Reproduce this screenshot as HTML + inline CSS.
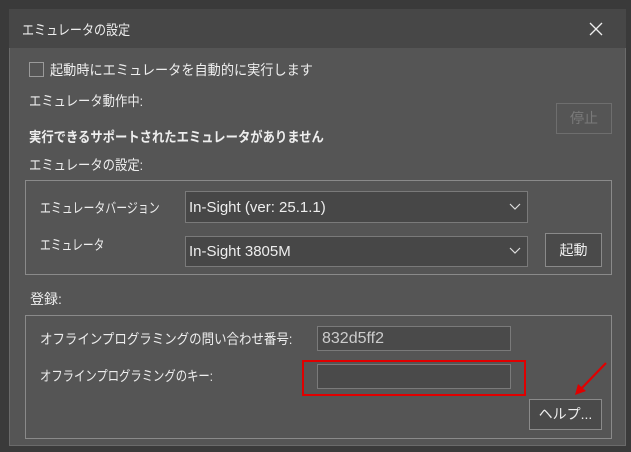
<!DOCTYPE html>
<html><head><meta charset="utf-8"><style>
*{box-sizing:border-box;margin:0;padding:0}
body{width:631px;height:452px;background:#3a3a3a;font-family:"Liberation Sans","Noto Sans CJK JP",sans-serif;font-size:14px;color:#eee;position:relative;overflow:hidden}
.a{position:absolute}
.dlg{left:9px;top:9px;width:617px;height:437px;background:#555;border:1px solid #6a6a6a}
.title{left:9px;top:9px;width:617px;height:39px;background:#474747}
.t{position:absolute;white-space:nowrap;line-height:16px;transform-origin:0 50%}
.box{position:absolute;border:1px solid #8a8a8a}
.combo{position:absolute;background:#474747;border:1px solid #7a7a7a}
.btn{position:absolute;background:#4a4a4a;border:1px solid #8a8a8a;text-align:center;line-height:28px}
.l{font-size:15px}
</style></head><body>
<div class="a dlg"></div>
<div class="a title"></div>
<div class="t" style="left:22px;top:22px;transform:scaleX(0.86)">エミュレータの設定</div>
<svg class="a" style="left:589px;top:22px" width="14" height="14"><path d="M1 1L13 13M13 1L1 13" stroke="#eee" stroke-width="1.3"/></svg>
<div class="box" style="left:29px;top:62px;width:15px;height:15px;border-color:#9a9a9a"></div>
<div class="t" style="left:50px;top:62px;transform:scaleX(0.94)">起動時にエミュレータを自動的に実行します</div>
<div class="t" style="left:29px;top:93px;transform:scaleX(0.88)">エミュレータ動作中:</div>
<div class="btn" style="left:556px;top:103px;width:56px;height:31px;color:#7a7a7a;border-color:#6e6e6e;background:#555">停止</div>
<div class="t" style="left:29px;top:129px;font-weight:bold;transform:scaleX(0.88)">実行できるサポートされたエミュレータがありません</div>
<div class="t" style="left:29px;top:157px;transform:scaleX(0.88)">エミュレータの設定:</div>
<div class="box" style="left:25px;top:180px;width:587px;height:95px"></div>
<div class="t" style="left:40px;top:200px;transform:scaleX(0.78)">エミュレータバージョン</div>
<div class="combo" style="left:185px;top:191px;width:343px;height:32px"></div>
<div class="t l" style="left:189px;top:200px">In-Sight (ver: 25.1.1)</div>
<div class="t" style="left:40px;top:237px;transform:scaleX(0.77)">エミュレータ</div>
<div class="combo" style="left:185px;top:236px;width:343px;height:31px"></div>
<div class="t l" style="left:189px;top:244px">In-Sight 3805M</div>
<svg class="a" style="left:509px;top:203px" width="12" height="8"><path d="M1 1L6 6L11 1" stroke="#ddd" fill="none" stroke-width="1.2"/></svg>
<svg class="a" style="left:509px;top:247px" width="12" height="8"><path d="M1 1L6 6L11 1" stroke="#ddd" fill="none" stroke-width="1.2"/></svg>
<div class="btn" style="left:545px;top:233px;width:57px;height:34px;line-height:32px">起動</div>
<div class="t" style="left:30px;top:291px">登録:</div>
<div class="box" style="left:25px;top:315px;width:587px;height:124px"></div>
<div class="t" style="left:40px;top:331px;transform:scaleX(0.89)">オフラインプログラミングの問い合わせ番号:</div>
<div class="combo" style="left:317px;top:326px;width:194px;height:25px;background:#4a4a4a"></div>
<div class="t" style="left:322px;top:331px;color:#ccc;font-size:16px">832d5ff2</div>
<div class="t" style="left:40px;top:368px;transform:scaleX(0.81)">オフラインプログラミングのキー:</div>
<div class="combo" style="left:317px;top:364px;width:194px;height:25px;background:#4a4a4a"></div>
<div class="box" style="left:302px;top:360px;width:224px;height:36px;border:2px solid #e00000"></div>
<div class="btn" style="left:529px;top:399px;width:73px;height:31px">ヘルプ...</div>
<svg class="a" style="left:570px;top:360px" width="40" height="38"><path d="M36 3L9 31" stroke="#e00000" stroke-width="2.2"/><path d="M5 35L8 24L16 31Z" fill="#e00000"/></svg>
</body></html>
